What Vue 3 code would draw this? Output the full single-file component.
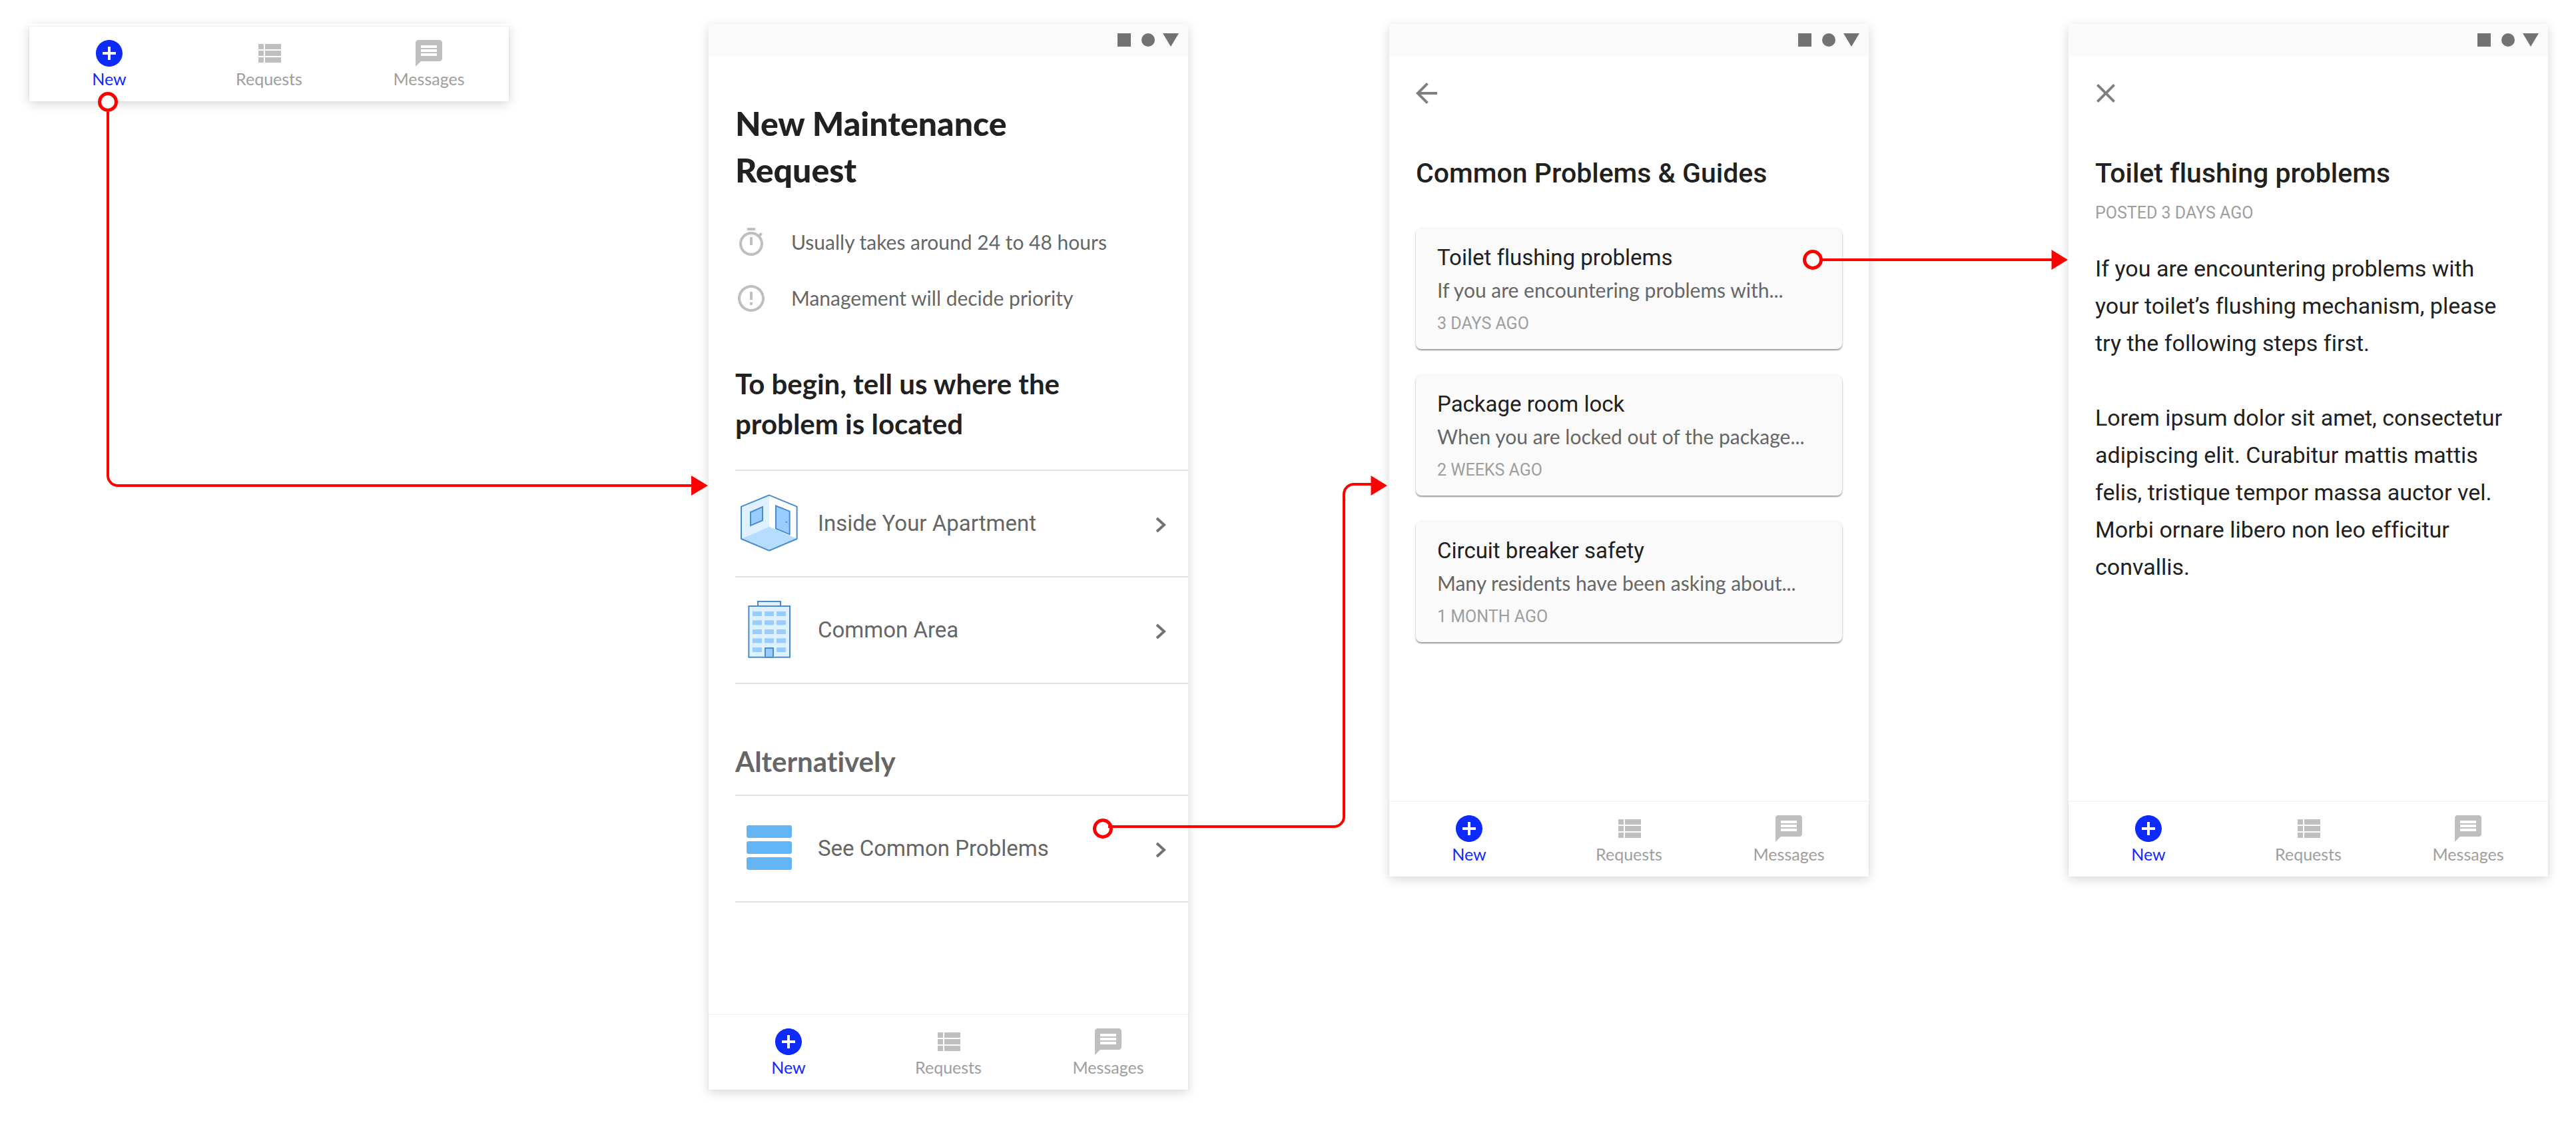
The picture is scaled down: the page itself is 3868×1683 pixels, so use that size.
<script setup>
const tabs = [
  { label: 'New', icon: 'M12 2C6.48 2 2 6.48 2 12s4.48 10 10 10 10-4.48 10-10S17.52 2 12 2zm5 11h-4v4h-2v-4H7v-2h4V7h2v4h4v2z' },
  { label: 'Requests', icon: 'M4 14h4v-4H4v4zm0 5h4v-4H4v4zM4 9h4V5H4v4zm5 5h12v-4H9v4zm0 5h12v-4H9v4zM9 5v4h12V5H9z' },
  { label: 'Messages', icon: 'M20 2H4c-1.1 0-1.99.9-1.99 2L2 22l4-4h14c1.1 0 2-.9 2-2V4c0-1.1-.9-2-2-2zm-2 12H6v-2h12v2zm0-3H6V9h12v2zm0-3H6V6h12v2z' }
]

const panels = ['tabs', 'request', 'guides', 'article']

const facts = [
  { text: 'Usually takes around 24 to 48 hours', icon: 'M15 1H9v2h6V1zm-4 13h2V8h-2v6zm8.03-6.61l1.42-1.42c-.43-.51-.9-.99-1.41-1.41l-1.42 1.42C16.07 4.74 14.12 4 12 4c-4.97 0-9 4.03-9 9s4.02 9 9 9 9-4.03 9-9c0-2.12-.74-4.07-1.97-5.61zM12 20c-3.87 0-7-3.13-7-7s3.13-7 7-7 7 3.13 7 7-3.13 7-7 7z' },
  { text: 'Management will decide priority', icon: 'M11 15h2v2h-2zm0-8h2v6h-2zm.99-5C6.47 2 2 6.48 2 12s4.47 10 9.99 10C17.52 22 22 17.52 22 12S17.52 2 11.99 2zM12 20c-4.42 0-8-3.58-8-8s3.58-8 8-8 8 3.58 8 8-3.58 8-8 8z' }
]

const guides = [
  { title: 'Toilet flushing problems', excerpt: 'If you are encountering problems with...', age: '3 DAYS AGO' },
  { title: 'Package room lock', excerpt: 'When you are locked out of the package...', age: '2 WEEKS AGO' },
  { title: 'Circuit breaker safety', excerpt: 'Many residents have been asking about...', age: '1 MONTH AGO' }
]

const windowRows = [594, 634, 675, 715, 756]
const windowColumns = [120, 174, 228]
</script>

<template>
  <div class="board">
    <section v-for="panel in panels" :key="panel" class="panel" :class="`panel-${panel}`">
      <div v-if="panel !== 'tabs'" class="status">
        <svg width="92" height="20" viewBox="0 0 92 20" aria-hidden="true">
          <path d="M0 0h20v20H0zM68 0h24L80 20z" />
          <circle cx="46" cy="10" r="10" />
        </svg>
      </div>

      <main v-if="panel === 'request'" class="content request">
        <h1>New Maintenance<br />Request</h1>
        <ul class="facts">
          <li v-for="fact in facts" :key="fact.text">
            <svg class="icon" viewBox="0 0 24 24" aria-hidden="true"><path :d="fact.icon" /></svg>
            <span>{{ fact.text }}</span>
          </li>
        </ul>
        <h2>To begin, tell us where the<br />problem is located</h2>
        <nav class="rows">
          <a href="#inside" class="row">
            <svg class="art" viewBox="45 45 300 300" aria-hidden="true">
              <path fill="#fff" d="M195 70l125 52v145l-125 53-126-53V122z" />
              <path fill="#dff0ff" d="M195 70v142L69 267V122z" />
              <path fill="#b6dcff" d="M195 212l125 55-125 53-126-53z" />
              <g stroke="#4a8ccb" stroke-width="6">
                <path fill="none" d="M195 70l125 52v145l-125 53-126-53V122z" />
                <path fill="#99ccff" d="M111 147l54-24v61l-54 23zM225 118l62 25v104l-62-26z" />
              </g>
              <path fill="#4a8ccb" d="M269 188h6v7h-6z" />
            </svg>
            <span>Inside Your Apartment</span>
            <svg class="chevron" viewBox="0 0 20 28" aria-hidden="true"><path d="M3 4l11 10L3 24" /></svg>
          </a>
          <a href="#common" class="row">
            <svg class="art" viewBox="45 525 300 300" aria-hidden="true">
              <g fill="#dff0ff" stroke="#4a8ccb" stroke-width="6">
                <path d="M144 549h102v21H144z" />
                <path d="M103 570h185v230H103z" />
              </g>
              <g v-for="y in windowRows" :key="y" fill="#99ccff">
                <rect v-for="x in windowColumns" :key="x" :x="x" :y="y" width="42" height="21" />
              </g>
              <path fill="#dff0ff" d="M168 750h54v47h-54z" />
              <path fill="#99ccff" stroke="#4a8ccb" stroke-width="6" d="M177 759h36v41h-36z" />
            </svg>
            <span>Common Area</span>
            <svg class="chevron" viewBox="0 0 20 28" aria-hidden="true"><path d="M3 4l11 10L3 24" /></svg>
          </a>
        </nav>
        <h2 class="alternative">Alternatively</h2>
        <nav class="rows">
          <a href="#problems" class="row">
            <svg class="art" viewBox="0 0 100 100" aria-hidden="true">
              <g fill="#64b5f6">
                <rect x="16" y="16" width="68" height="19" rx="3" />
                <rect x="16" y="40" width="68" height="19" rx="3" />
                <rect x="16" y="64" width="68" height="19" rx="3" />
              </g>
            </svg>
            <span>See Common Problems</span>
            <svg class="chevron" viewBox="0 0 20 28" aria-hidden="true"><path d="M3 4l11 10L3 24" /></svg>
          </a>
        </nav>
      </main>

      <main v-if="panel === 'guides'" class="content guides">
        <button type="button" class="tool" aria-label="Back">
          <svg class="icon" viewBox="0 0 24 24"><path d="M20 11H7.83l5.59-5.59L12 4l-8 8 8 8 1.41-1.41L7.83 13H20v-2z" /></svg>
        </button>
        <h2>Common Problems &amp; Guides</h2>
        <div class="cards">
          <a v-for="guide in guides" :key="guide.title" href="#guide" class="card">
            <h3>{{ guide.title }}</h3>
            <p>{{ guide.excerpt }}</p>
            <small>{{ guide.age }}</small>
          </a>
        </div>
      </main>

      <main v-if="panel === 'article'" class="content article">
        <button type="button" class="tool" aria-label="Close">
          <svg class="icon" viewBox="0 0 24 24"><path d="M19 6.41L17.59 5 12 10.59 6.41 5 5 6.41 10.59 12 5 17.59 6.41 19 12 13.41 17.59 19 19 17.59 13.41 12z" /></svg>
        </button>
        <h2>Toilet flushing problems</h2>
        <small>POSTED 3 DAYS AGO</small>
        <p>If you are encountering problems with<br />your toilet’s flushing mechanism, please<br />try the following steps first.</p>
        <p>Lorem ipsum dolor sit amet, consectetur<br />adipiscing elit. Curabitur mattis mattis<br />felis, tristique tempor massa auctor vel.<br />Morbi ornare libero non leo efficitur<br />convallis.</p>
      </main>

      <nav class="tabs">
        <a v-for="(tab, index) in tabs" :key="tab.label" href="#tab" class="tab" :class="{ active: index === 0 }">
          <svg class="icon" viewBox="0 0 24 24" aria-hidden="true"><path :d="tab.icon" /></svg>
          <span>{{ tab.label }}</span>
        </a>
      </nav>
    </section>

    <div class="link link-request">
      <svg class="link-start" viewBox="0 0 30 30" aria-hidden="true"><circle cx="15" cy="15" r="12.5" /></svg>
      <svg class="link-end" viewBox="0 0 25 30" aria-hidden="true"><path d="M0 0l25 15L0 30z" /></svg>
    </div>
    <div class="link link-guides">
      <svg width="452" height="560" viewBox="0 0 452 560" aria-hidden="true">
        <circle cx="22" cy="540" r="12.5" />
        <path class="wire" d="M30 537H369a15 15 0 0 0 15-15V38a15 15 0 0 1 15-15H426" />
        <path d="M424.500 10l24.500 15-24.500 15z" />
      </svg>
    </div>
    <div class="link link-article">
      <svg width="410" height="40" viewBox="0 0 410 40" aria-hidden="true">
        <circle cx="26" cy="20" r="12.5" />
        <path class="wire" d="M38 20H386" />
        <path d="M384.500 5l24.500 15-24.500 15z" />
      </svg>
    </div>
  </div>
</template>

<style>
body {
  margin: 0;
  background: #fff;
}
</style>

<style scoped>
.board {
  display: grid;
  grid-template-columns: minmax(640px, 1fr) 300px minmax(640px, 1fr) 302px minmax(640px, 1fr) 300px minmax(640px, 1fr);
  align-items: start;
  padding: 36px 42px 47px 44px;
  font-family: Lato, "Liberation Sans", sans-serif;
  font-variant-ligatures: none;
  color: #212121;
}

h1,
h2,
h3,
p,
ul {
  margin: 0;
  padding: 0;
}

a {
  color: inherit;
  text-decoration: none;
}

svg {
  display: block;
  flex: none;
}

.panel {
  grid-row: 1;
  background: #fff;
  box-shadow: 0 4px 16px rgba(0, 0, 0, 0.16);
}

.panel-tabs {
  grid-column: 1;
  padding-top: 4px;
}

.panel-request {
  grid-column: 3;
}

.panel-guides {
  grid-column: 5;
}

.panel-article {
  grid-column: 7;
}

.status {
  display: flex;
  align-items: center;
  justify-content: flex-end;
  height: 48px;
  padding-right: 14px;
  background: #fafafa;
  fill: #727272;
}

.content {
  padding-left: 40px;
}

.icon {
  width: 48px;
  height: 48px;
  fill: currentColor;
}

h1 {
  font-size: 50px;
  font-weight: 900;
  line-height: 70px;
}

h2 {
  font-size: 42px;
  font-weight: 700;
  line-height: 60px;
}

.request {
  padding-top: 66px;
  padding-bottom: 169px;
}

.facts {
  display: flex;
  flex-direction: column;
  gap: 36px;
  margin: 50px 0 74px;
  color: #bfbfbf;
  list-style: none;
}

.facts li {
  display: flex;
  align-items: center;
  gap: 36px;
}

.facts span {
  font-size: 30px;
  line-height: 46px;
  padding-bottom: 2px;
  color: #666;
}

.rows {
  margin-top: 39px;
  border-bottom: 2px solid #e3e3e3;
}

.alternative {
  margin-top: 86px;
  color: #666;
}

.alternative + .rows {
  margin-top: 20px;
}

.row {
  display: flex;
  align-items: center;
  gap: 23px;
  height: 156px;
  padding: 0 30px 2px 0;
  border-top: 2px solid #e3e3e3;
  font-family: Roboto, sans-serif;
  font-size: 33px;
  color: #666;
}

.row span {
  flex: 1;
}

.art {
  width: 100px;
  height: 100px;
  margin-left: 1px;
}

.chevron {
  width: 20px;
  height: 28px;
  margin-top: 6px;
  fill: none;
  stroke: #727272;
  stroke-width: 4px;
}

.tool {
  display: block;
  margin: 0 0 66px -8px;
  padding: 0;
  border: 0;
  background: none;
  color: #7f7f7f;
}

.guides,
.article {
  padding-top: 32px;
  padding-right: 40px;
  font-family: Roboto, sans-serif;
}

.guides h2,
.article h2 {
  font-size: 41px;
  font-weight: 500;
}

.guides {
  padding-bottom: 240px;
}

.cards {
  display: grid;
  gap: 40px;
  margin-top: 54px;
}

.card {
  padding: 19px 32px 11px;
  border-radius: 8px;
  background: #fafafa;
  box-shadow: 0 2px 2px rgba(0, 0, 0, 0.36), 0 0 4px rgba(0, 0, 0, 0.1);
}

.card h3 {
  font-size: 33px;
  font-weight: 400;
  line-height: 48px;
}

.card p {
  font-family: Lato, sans-serif;
  font-size: 30px;
  line-height: 48px;
  color: #666;
}

small {
  display: block;
  font-size: 25px;
  line-height: 54px;
  color: #9e9e9e;
}

.article {
  padding-bottom: 325px;
}

.article small {
  margin: 3px 0 28px;
}

.article p {
  font-size: 34px;
  line-height: 56px;
}

.article p + p {
  margin-top: 56px;
}

.tabs {
  display: grid;
  grid-template-columns: repeat(3, 1fr);
  height: 112px;
  background: #fff;
  box-shadow: 0 -1px 3px rgba(0, 0, 0, 0.08);
}

.tab {
  display: flex;
  flex-direction: column;
  align-items: center;
  padding-top: 16px;
  color: #bfbfbf;
}

.tab span {
  font-size: 25px;
  line-height: 28px;
  color: #9e9e9e;
}

.tab.active,
.tab.active span {
  color: #0d2bff;
}

.link {
  position: relative;
  z-index: 1;
  grid-row: 1;
  pointer-events: none;
  fill: #f00;
}

.link circle {
  fill: #fff;
  stroke: #f00;
  stroke-width: 5px;
}

.link .wire {
  fill: none;
  stroke: #f00;
  stroke-width: 4px;
}

.link-request {
  grid-column: 1 / 3;
  height: 559px;
  margin: 132px 26px 0 116px;
  border: solid #f00;
  border-width: 0 0 4px 4px;
  border-bottom-left-radius: 17px;
}

.link-start {
  position: absolute;
  bottom: 100%;
  left: -17px;
  width: 30px;
}

.link-end {
  position: absolute;
  bottom: -17px;
  left: 100%;
  width: 25px;
}

.link-guides {
  grid-column: 4;
  margin: 668px 0 0 -150px;
}

.link-article {
  grid-column: 6;
  margin: 334px 0 0 -110px;
}
</style>
